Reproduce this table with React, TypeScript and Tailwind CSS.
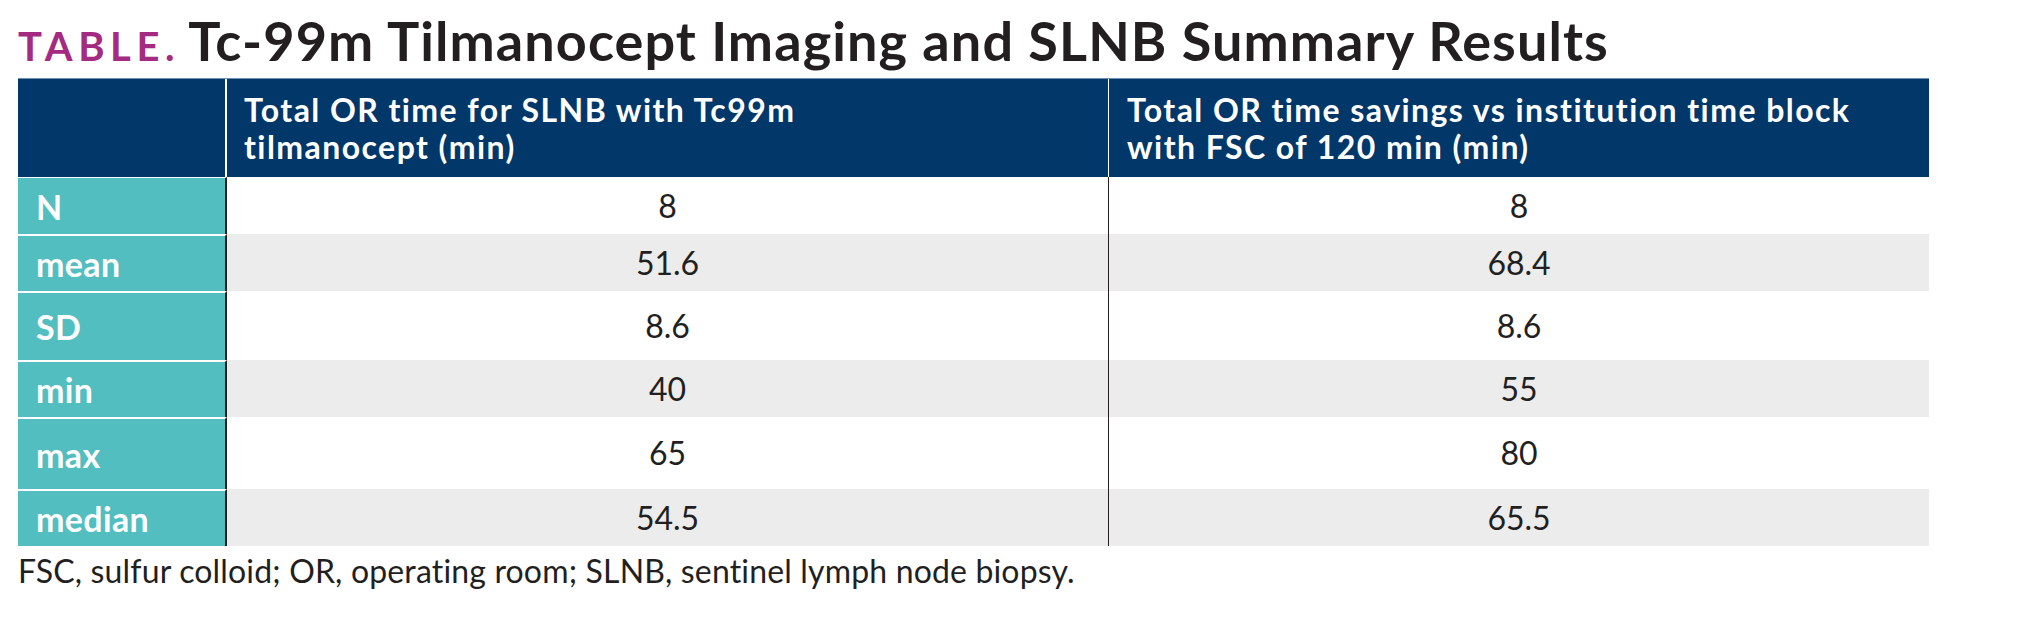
import React from 'react'

type Row = {
  label: string
  a: string
  b: string
  height: string
  shade: boolean
}

const rows: Row[] = [
  { label: 'N', a: '8', b: '8', height: 'h-[57px]', shade: false },
  { label: 'mean', a: '51.6', b: '68.4', height: 'h-[57px]', shade: true },
  { label: 'SD', a: '8.6', b: '8.6', height: 'h-[69px]', shade: false },
  { label: 'min', a: '40', b: '55', height: 'h-[57px]', shade: true },
  { label: 'max', a: '65', b: '80', height: 'h-[72px]', shade: false },
  { label: 'median', a: '54.5', b: '65.5', height: 'h-[57px]', shade: true },
]

export default function App() {
  return (
    <div className="w-[2024px] h-[626px] bg-white px-[18px] pt-[14px] font-['Lato',sans-serif] text-[#231f20]">
      {/* Title */}
      <div className="flex items-baseline gap-[8px] mb-[10px]">
        <span className="text-[40px] leading-[40px] font-bold tracking-[0.14em] text-[#a52a82]">TABLE.</span>
        <h1 className="text-[54px] leading-[54px] font-bold tracking-[0.02em]">
          Tc-99m Tilmanocept Imaging and SLNB Summary Results
        </h1>
      </div>

      <div className="w-[1911px]">
        {/* Header */}
        <div className="flex h-[99px] bg-[#02376a] border-t border-[#6c91b3] text-white font-bold text-[32px] leading-[37px] tracking-[0.045em]">
          <div className="w-[209px] shrink-0 border-r-2 border-white" />
          <div className="w-[882px] shrink-0 border-r border-white flex items-center pl-[17px]">
            <p>
              Total OR time for SLNB with Tc99m
              <br />
              tilmanocept (min)
            </p>
          </div>
          <div className="flex-1 flex items-center pl-[18px]">
            <p>
              Total OR time savings vs institution time block
              <br />
              with FSC of 120 min (min)
            </p>
          </div>
        </div>

        {/* Body */}
        {rows.map((row, i) => (
          <div
            key={row.label}
            className={`flex ${row.height} ${row.shade ? 'bg-[#ebeceb]' : 'bg-white'}`}
          >
            <div
              className={`w-[209px] shrink-0 bg-[#52bec0] border-r-2 border-r-[#231f20] flex items-center pl-[18px] text-white font-bold text-[34px] tracking-[0.01em] ${
                i === 0 ? 'border-t border-t-white' : 'border-t-2 border-t-white'
              }`}
            >
              {row.label}
            </div>
            <div className="w-[882px] shrink-0 border-r border-[#231f20] flex items-center justify-center text-[32px]">
              {row.a}
            </div>
            <div className="flex-1 flex items-center justify-center text-[32px]">
              {row.b}
            </div>
          </div>
        ))}
      </div>

      {/* Footnote */}
      <p className="mt-[5px] text-[32px] leading-[40px] tracking-[0.005em]">
        FSC, sulfur colloid; OR, operating room; SLNB, sentinel lymph node biopsy.
      </p>
    </div>
  )
}
